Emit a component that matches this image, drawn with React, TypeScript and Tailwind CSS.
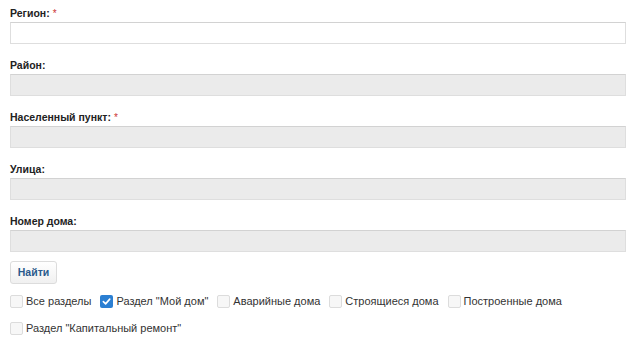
import React from 'react';

type Field = { label: string; required?: boolean; disabled?: boolean };

const FIELDS: Field[] = [
    { label: 'Регион:', required: true },
    { label: 'Район:', disabled: true },
    { label: 'Населенный пункт:', required: true, disabled: true },
    { label: 'Улица:', disabled: true },
    { label: 'Номер дома:', disabled: true },
];

const SECTIONS = [
    { label: 'Все разделы', checked: false },
    { label: 'Раздел "Мой дом"', checked: true },
    { label: 'Аварийные дома', checked: false },
    { label: 'Строящиеся дома', checked: false },
    { label: 'Построенные дома', checked: false },
    { label: 'Раздел "Капитальный ремонт"', checked: false },
];

const Checkbox: React.FC<{ checked: boolean }> = ({ checked }) =>
    checked ? (
        <span className="w-[13px] h-[13px] shrink-0 rounded-[2px] bg-[#2b7fd2] flex items-center justify-center">
            <svg width="9" height="9" viewBox="0 0 10 10" fill="none">
                <path d="M1.5 5.2 L4 7.6 L8.6 2.4" stroke="#fff" strokeWidth="1.8" strokeLinecap="round" strokeLinejoin="round" />
            </svg>
        </span>
    ) : (
        <span className="w-[13px] h-[13px] shrink-0 rounded-[2px] border border-[#dcdcdc] bg-[#f7f7f7]"></span>
    );

const App: React.FC = () => {
    return (
        <div className="min-h-screen bg-white pt-[7px] pl-[10px] pr-[14px] text-[11px] text-[#222]" style={{ fontFamily: '"Liberation Sans", Arial, sans-serif' }}>
            {/* Search fields */}
            <div className="flex flex-col gap-[15px]">
                {FIELDS.map((f, idx) => (
                    <div key={idx}>
                        <div className="h-[13px] leading-[13px] mb-[2px] font-bold text-[10.5px]">
                            {f.label}
                            {f.required && <span className="ml-[3px] font-normal text-[10px] text-[#cc3333] align-top">*</span>}
                        </div>
                        <input
                            type="text"
                            disabled={f.disabled}
                            className={`block w-full h-[22px] border border-[#dedede] border-t-[#d2d2d2] outline-none px-1 ${f.disabled ? 'bg-[#ebebeb]' : 'bg-white'}`}
                        />
                    </div>
                ))}
            </div>

            {/* Submit */}
            <button className="mt-[9px] w-[47px] h-[23px] rounded-[3px] border border-[#dcdcdc] bg-gradient-to-b from-white to-[#f0f0f0] font-bold text-[10.5px] text-[#2a5a8c]">
                Найти
            </button>

            {/* Sections */}
            <div className="mt-[11px] flex flex-wrap gap-x-[9px] gap-y-[14px]">
                {SECTIONS.map((s, idx) => (
                    <label key={idx} className="flex items-center gap-[3px] h-[13px] leading-[13px] text-[#333]">
                        <Checkbox checked={s.checked} />
                        <span>{s.label}</span>
                    </label>
                ))}
            </div>
        </div>
    );
};

export default App;
